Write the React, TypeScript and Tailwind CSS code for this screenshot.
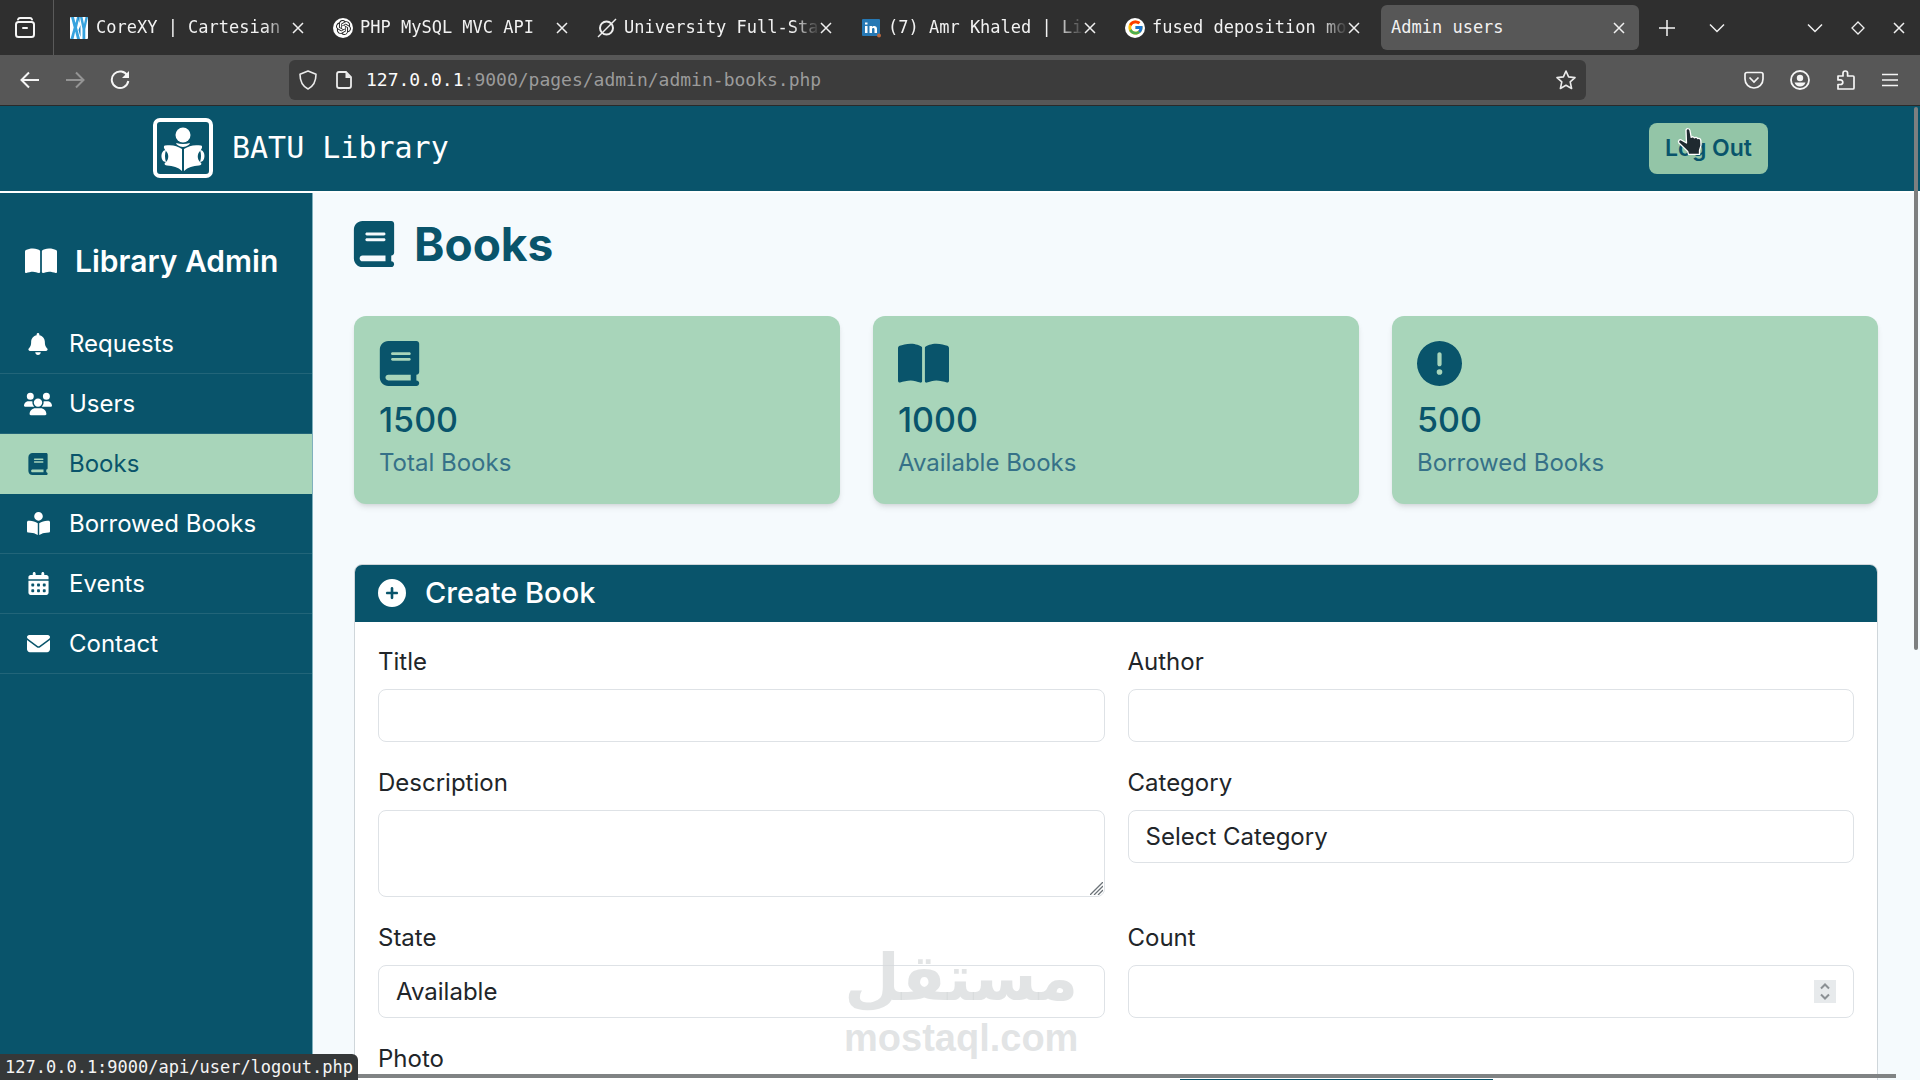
import React from "react";
import {
  FaBell,
  FaUsers,
  FaBook,
  FaBookOpen,
  FaBookOpenReader,
  FaCalendarDays,
  FaCircleExclamation,
  FaCirclePlus,
  FaEnvelope,
} from "react-icons/fa6";
import { FcGoogle } from "react-icons/fc";
import { SiOpenai } from "react-icons/si";

/* BROWSER TABS DATA */
const tabs = [
  { title: "CoreXY | Cartesian M", icon: <CoreIcon /> },
  { title: "PHP MySQL MVC API", icon: <ChatIcon /> },
  { title: "University Full-Stac", icon: <SlashIcon /> },
  { title: "(7) Amr Khaled | Lin", icon: <LinkedInIcon /> },
  { title: "fused deposition mod", icon: <GoogleIcon /> },
];

/* SIDEBAR LINKS */
const links = [
  { label: "Requests", icon: <FaBell size={22} /> },
  { label: "Users", icon: <FaUsers size={28} /> },
  { label: "Books", icon: <FaBook size={22} />, active: true },
  { label: "Borrowed Books", icon: <FaBookOpenReader size={23} /> },
  { label: "Events", icon: <FaCalendarDays size={23} /> },
  { label: "Contact", icon: <FaEnvelope size={23} /> },
];

const stats = [
  { value: "1500", label: "Total Books", icon: <FaBook size={45} className="-ml-0.5" /> },
  { value: "1000", label: "Available Books", icon: <FaBookOpen size={51} /> },
  { value: "500", label: "Borrowed Books", icon: <FaCircleExclamation size={45} /> },
];

const labelClass = "mb-[11px] block";
const fieldClass =
  "h-[53px] w-full appearance-none rounded-lg border border-[#dee2e6] bg-white px-[17px] text-[#212529] outline-none";

function CoreIcon() {
  return (
    <svg width="20" height="24" viewBox="0 0 20 24">
      <rect x="1" y="1" width="18" height="22" rx="1" fill="#fff" />
      <path d="M2 1h3l1.500 6L8 1h2.500L8 11.500 11 23H8l-1.800-7.500L4.500 23H1.500l3.200-11.500z" fill="#37a3de" />
      <path d="M11 1h2.500l1.500 7 1.500-7H19l-2.700 12v10h-2.800V13z" fill="#37a3de" />
      <path d="M8.500 1h2v6zM9.500 14l2-5v12z" fill="#1f86c4" />
    </svg>
  );
}

function ChatIcon() {
  return (
    <span className="flex size-5 items-center justify-center rounded-full bg-white">
      <SiOpenai size={15} className="text-[#222]" />
    </span>
  );
}

function SlashIcon() {
  return (
    <svg width="20" height="20" viewBox="0 0 20 20" fill="none" stroke="#eee">
      <circle cx="9.500" cy="10" r="6.500" strokeWidth="2" />
      <path d="M1 19L19 1" strokeWidth="1.500" />
    </svg>
  );
}

function LinkedInIcon() {
  return (
    <svg width="20" height="20" viewBox="0 0 20 20">
      <rect x="1" y="1" width="18" height="17" rx="1" fill="#2678b4" />
      <path
        d="M4 8h2.500v7H4zM4 4.500h2.500v2H4zM8.500 8H11v1c1-1.600 5-1.700 5 1.800V15h-2.500v-3.700c0-1.900-2.500-1.700-2.500 0V15H8.500z"
        fill="#fff"
      />
      <circle cx="18" cy="17.500" r="2" fill="#b9683f" />
    </svg>
  );
}

function GoogleIcon() {
  return (
    <span className="flex size-5 items-center justify-center rounded-full bg-white">
      <FcGoogle size={17} />
    </span>
  );
}

function CloseIcon() {
  return (
    <svg width="12" height="12" viewBox="0 0 12 12" stroke="#f0f0f0" strokeWidth="1.500">
      <path d="M1 1l10 10M11 1L1 11" />
    </svg>
  );
}

function Chevron() {
  return (
    <svg width="16" height="16" viewBox="0 0 16 16" fill="none" stroke="#f0f0f0" strokeWidth="1.500">
      <path d="M1 4.500l7 7 7-7" />
    </svg>
  );
}

function TabBar() {
  return (
    <div className="flex h-[55px] items-center bg-[#2f2f2f] text-[17px] text-[#f2f2f2]">
      <button aria-label="Recent browsing" className="flex h-full w-[54px] items-center justify-center border-r border-[#5a5a5a] pr-1">
        <svg width="22" height="22" viewBox="0 0 22 22" fill="none" stroke="#f5f5f5" strokeWidth="2" strokeLinecap="round">
          <path d="M4 2.500q.5-1.500 2-1.500h10q1.500 0 2 1.500" />
          <rect x="2" y="5" width="18" height="15" rx="2.500" />
          <path d="M9 11h4" />
        </svg>
      </button>
      <div className="ml-[7px] flex gap-1.5">
        {tabs.map((tab) => (
          <div key={tab.title} className="flex h-[45px] w-[258px] items-center pr-[15px] pl-2">
            {tab.icon}
            <span className="ml-[7px] min-w-0 flex-1 overflow-hidden whitespace-nowrap [mask-image:linear-gradient(to_right,#000_86%,transparent)]">
              {tab.title}
            </span>
            <button aria-label="Close tab">
              <CloseIcon />
            </button>
          </div>
        ))}
        <div className="flex h-[45px] w-[258px] items-center justify-between rounded-md bg-[#575757] pr-3.5 pl-2.5">
          <span>Admin users</span>
          <button aria-label="Close tab">
            <CloseIcon />
          </button>
        </div>
      </div>
      <button aria-label="New tab" className="ml-5">
        <svg width="16" height="16" viewBox="0 0 16 16" stroke="#f5f5f5" strokeWidth="1.500">
          <path d="M8 0v16M0 8h16" />
        </svg>
      </button>
      <button aria-label="List tabs" className="ml-[34px]">
        <Chevron />
      </button>
      <div className="ml-auto flex items-center gap-7 pr-[15px]">
        <button aria-label="Minimize">
          <Chevron />
        </button>
        <button aria-label="Maximize">
          <svg width="14" height="14" viewBox="0 0 14 14" fill="none" stroke="#f0f0f0" strokeWidth="1.300">
            <path d="M7 1l6 6-6 6-6-6z" />
          </svg>
        </button>
        <button aria-label="Close window">
          <CloseIcon />
        </button>
      </div>
    </div>
  );
}

function Toolbar() {
  return (
    <div className="flex h-[51px] items-center border-b border-[#2a2a2a] bg-[#575757]">
      <div className="flex w-[289px] items-center gap-[25px] pl-5">
        <button aria-label="Back">
          <svg width="20" height="20" viewBox="0 0 20 20" fill="none" stroke="#f5f5f5" strokeWidth="2">
            <path d="M19 10H2M9 2.500L1.500 10 9 17.500" />
          </svg>
        </button>
        <button aria-label="Forward">
          <svg width="20" height="20" viewBox="0 0 20 20" fill="none" stroke="#949494" strokeWidth="2">
            <path d="M1 10h17M11 2.500l7.500 7.500-7.500 7.500" />
          </svg>
        </button>
        <button aria-label="Reload">
          <svg width="20" height="20" viewBox="0 0 20 20" fill="none" stroke="#f5f5f5" strokeWidth="2">
            <path d="M17.500 6A8.300 8.300 0 1 0 18.300 11" />
            <path d="M19 1v7h-7z" fill="#f5f5f5" stroke="none" />
          </svg>
        </button>
      </div>
      <div className="flex h-10 flex-1 items-center rounded-md bg-[#3c3c3c] px-2.5">
        <svg width="18" height="20" viewBox="0 0 18 20" fill="none" stroke="#ebebeb" strokeWidth="1.600">
          <path d="M9 1l8 3.300c0 7-2.500 12-8 14.700C3.500 16.300 1 11.300 1 4.300z" strokeLinejoin="round" />
        </svg>
        <svg className="ml-[19px]" width="16" height="18" viewBox="0 0 16 18" fill="none" stroke="#ebebeb" strokeWidth="1.800">
          <path d="M3 1h7l5 5v9q0 2-2 2H3q-2 0-2-2V3q0-2 2-2z" />
          <path d="M9.500 1v6H15z" fill="#ebebeb" stroke="none" />
        </svg>
        <div className="ml-3.5 flex-1 text-lg text-[#9b9b9b]">
          <span className="text-[#fbfbfb]">127.0.0.1</span>:9000/pages/admin/admin-books.php
        </div>
        <button aria-label="Bookmark">
          <svg width="20" height="20" viewBox="0 0 20 20" fill="none" stroke="#ebebeb" strokeWidth="1.600" strokeLinejoin="round">
            <path d="M10 1l2.600 5.900 6.400.7-4.800 4.300 1.400 6.600L10 15.300l-5.600 3.200 1.400-6.600L1 7.600l6.400-.7z" />
          </svg>
        </button>
      </div>
      <div className="flex w-[334px] items-center justify-end gap-[26px] pr-[22px]">
        <button aria-label="Pocket">
          <svg width="20" height="20" viewBox="0 0 20 20" fill="none" stroke="#f5f5f5" strokeWidth="1.700">
            <path d="M3 2.500h14q2 0 2 2V9c0 5-4 9-9 9s-9-4-9-9V4.500q0-2 2-2z" />
            <path d="M5.500 7.500L10 12l4.500-4.500" />
          </svg>
        </button>
        <button aria-label="Account">
          <svg width="20" height="20" viewBox="0 0 20 20" fill="none" stroke="#f5f5f5" strokeWidth="1.800">
            <circle cx="10" cy="10" r="9" />
            <circle cx="10" cy="8" r="3.200" fill="#f5f5f5" stroke="none" />
            <path d="M4.500 12.500h11q-1.500 4-5.500 4t-5.500-4z" fill="#f5f5f5" stroke="none" />
          </svg>
        </button>
        <button aria-label="Extensions">
          <svg width="20" height="20" viewBox="0 0 20 20" fill="none" stroke="#f5f5f5" strokeWidth="1.700" strokeLinejoin="round">
            <path d="M2 19v-4.500h2.500a2.300 2.300 0 0 0 0-4.600H2V6h5V3.300a2.300 2.300 0 0 1 4.600 0V6H17q1 0 1 1v11q0 1-1 1z" />
          </svg>
        </button>
        <button aria-label="Menu">
          <svg width="16" height="14" viewBox="0 0 16 14" stroke="#f5f5f5" strokeWidth="1.600">
            <path d="M0 1.500h16M0 7h16M0 12.500h16" />
          </svg>
        </button>
      </div>
    </div>
  );
}

function Logo() {
  return (
    <svg width="62" height="62" viewBox="0 0 62 62" fill="#fff">
      <rect x="3" y="3" width="56" height="56" rx="5" fill="none" stroke="#fff" strokeWidth="4" />
      <circle cx="31" cy="18" r="7.500" />
      <path d="M24 26q7 2 14 0-1 3-7 4-6-1-7-4z" />
      <path d="M13 28.500c7-1 12 0 17 3.500v22c-4-4-9-5-15-5.500-3-.5-3-2.500-1-3.500 3-3 3-8 0-11-2-2-3-5-1-5.500z" />
      <path d="M49 28.500c-7-1-12 0-17 3.500v22c4-4 9-5 15-5.500 3-.5 3-2.500 1-3.500-3-3-3-8 0-11 2-2 3-5 1-5.500z" />
      <path d="M14 33c-6 0-6 12 0 12q-2-6 0-12zM48 33c6 0 6 12 0 12q2-6 0-12z" />
    </svg>
  );
}

function Header() {
  return (
    <header className="flex h-[87px] items-center justify-between border-b-2 border-white bg-[#09546b] px-[152px] pb-px">
      <a href="#" className="flex items-center gap-[18px] font-['DejaVu_Sans_Mono',monospace] text-3xl text-white">
        <Logo />
        BATU Library
      </a>
      <div className="relative">
        <button className="h-[51px] rounded-lg bg-[#93c5a7] px-4 text-[23px] font-semibold text-[#09546b]">Log Out</button>
        {/* hand pointer */}
        <svg className="absolute top-1 left-7" width="28" height="30" viewBox="0 0 28 30">
          <path
            d="M9 3.500c0-2.600 3.600-2.600 4 0l1.200 6.800c1-.9 2.600-.6 3.200.6 1.200-.9 2.700-.5 3.200.7 1.600-.7 3 .2 3.200 1.800l.2 5-1.500 5v4H11.500l-.8-3L2 16c-1.500-2 .8-4.200 2.800-2.800L9.500 16z"
            fill="#1f2a30"
            stroke="#fff"
            strokeWidth="1.300"
            strokeLinejoin="round"
          />
        </svg>
      </div>
    </header>
  );
}

function Sidebar() {
  return (
    <aside className="w-[313px] shrink-0 border-r border-[#7fb0bd] bg-[#09546b] text-white">
      <div className="flex h-[121px] items-center gap-[18px] pt-[14px] pl-[25px] text-3xl font-semibold whitespace-nowrap">
        <FaBookOpen size={32} />
        Library Admin
      </div>
      <nav className="text-2xl">
        {links.map((link) => (
          <a
            key={link.label}
            href="#"
            className={
              link.active
                ? "flex h-[60px] items-center border-b border-[#a8d5ba] bg-[#a8d5ba] pl-6 text-[#09546b]"
                : "flex h-[60px] items-center border-b border-[#226579] pl-6"
            }
          >
            <span className="flex w-7 justify-center">{link.icon}</span>
            <span className="ml-[17px]">{link.label}</span>
          </a>
        ))}
      </nav>
    </aside>
  );
}

function CreateBook() {
  return (
    <section className="mt-[60px] rounded-lg border border-[#cfd6da] bg-white">
      <h2 className="flex h-[57px] items-center gap-[19px] rounded-t-[7px] bg-[#09546b] pb-0.5 pl-[23px] text-[29px] font-medium text-white">
        <FaCirclePlus size={28} />
        Create Book
      </h2>
      <form className="grid grid-cols-2 gap-x-[23px] gap-y-6 px-[23px] pt-[23px] pb-8 text-[#212529]">
        <div>
          <label htmlFor="title" className={labelClass}>Title</label>
          <input id="title" className={fieldClass} />
        </div>
        <div>
          <label htmlFor="author" className={labelClass}>Author</label>
          <input id="author" className={fieldClass} />
        </div>
        <div>
          <label htmlFor="description" className={labelClass}>Description</label>
          <div className="relative">
            <textarea
              id="description"
              className="block h-[87px] w-full resize-none rounded-lg border border-[#dee2e6] bg-white px-[17px] outline-none"
            />
            {/* resize grip */}
            <svg className="absolute right-0.5 bottom-0.5" width="13" height="13" viewBox="0 0 13 13" stroke="#6c7378" strokeWidth="1.300">
              <path d="M0 13L13 0M4 13l9-9M8 13l5-5" />
            </svg>
          </div>
        </div>
        <div>
          <label htmlFor="category" className={labelClass}>Category</label>
          <select id="category" className={fieldClass}>
            <option>Select Category</option>
          </select>
        </div>
        <div>
          <label htmlFor="state" className={labelClass}>State</label>
          <select id="state" className={fieldClass}>
            <option>Available</option>
          </select>
        </div>
        <div>
          <label htmlFor="count" className={labelClass}>Count</label>
          <div className="flex h-[53px] items-center rounded-lg border border-[#dee2e6] px-[17px]">
            <input
              id="count"
              type="number"
              className="min-w-0 flex-1 outline-none [appearance:textfield]"
            />
            <svg width="22" height="23" viewBox="0 0 22 23" fill="none" stroke="#8b9094" strokeWidth="2">
              <rect width="22" height="23" fill="#e7eaec" stroke="none" />
              <path d="M7 8.500l4-4 4 4M7 14.500l4 4 4-4" />
            </svg>
          </div>
        </div>
        <div>
          <label htmlFor="photo" className={labelClass}>Photo</label>
          <input id="photo" type="file" className={fieldClass} />
        </div>
      </form>
    </section>
  );
}

function Watermark() {
  return (
    <div className="pointer-events-none absolute bottom-[22px] left-[844px] flex flex-col items-center text-[#d5d8da]/70">
      <span dir="rtl" lang="ar" className="font-['DejaVu_Sans',sans-serif] text-[64px] leading-[80px] font-bold">
        مستقل
      </span>
      <span className="font-['Liberation_Sans',sans-serif] text-[38px] leading-10 font-bold">mostaql.com</span>
    </div>
  );
}

export default function App() {
  return (
    <div className="relative flex h-screen flex-col overflow-hidden bg-[#f5fafd] font-['DejaVu_Sans_Mono',monospace]">
      {/* START: BROWSER */}
      <TabBar />
      <Toolbar />
      {/* END: BROWSER */}

      {/* START: PAGE */}
      <div className="flex min-h-0 flex-1 flex-col font-[Inter,sans-serif] text-2xl leading-[33px]">
        <Header />
        <div className="flex min-h-0 flex-1">
          <Sidebar />
          <main className="min-w-0 flex-1 overflow-hidden pr-[42px] pl-[41px]">
            <h1 className="mt-6 flex h-[54px] items-center gap-5 text-[46px] font-bold text-[#09546b]">
              <FaBook size={46} className="-mx-[3px]" />
              Books
            </h1>
            <div className="mt-[45px] grid grid-cols-3 gap-[33px]">
              {stats.map((stat) => (
                <div key={stat.label} className="h-[188px] rounded-xl bg-[#a8d5ba] px-[25px] pt-[25px] text-[#09546b] shadow-md">
                  <div className="flex h-[45px] items-center">{stat.icon}</div>
                  <div className="mt-3 text-[34px] leading-[44px] font-medium">{stat.value}</div>
                  <div className="mt-1 leading-[34px] text-[#367188]">{stat.label}</div>
                </div>
              ))}
            </div>
            <CreateBook />
          </main>
        </div>
      </div>
      {/* END: PAGE */}

      <Watermark />

      {/* scrollbars and link preview */}
      <div className="absolute top-[107px] right-0.5 h-[543px] w-1 rounded bg-[#7d7f80]" />
      <div className="absolute right-6 bottom-0.5 left-[350px] h-1 bg-[#808384]" />
      <div className="absolute bottom-0 left-[1180px] h-px w-[313px] bg-[#09546b]" />
      <div className="absolute bottom-0 left-0 h-[26px] rounded-tr-md bg-[#353839] px-[5px] text-[17px] leading-[26px] text-[#f4f4f4]">
        127.0.0.1:9000/api/user/logout.php
      </div>
    </div>
  );
}
